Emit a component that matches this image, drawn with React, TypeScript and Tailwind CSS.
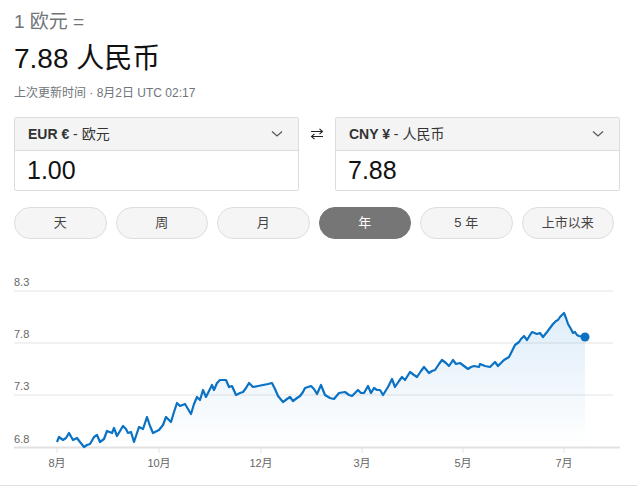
import React from "react";

const FONT = { fontFamily: '"Liberation Sans", Arial, "Noto Sans CJK SC", sans-serif' };

// chart points in page coordinates (svg viewBox starts at y=260)
const PTS: [number, number][] = [
  [57, 442], [59, 437], [63, 440], [66, 438], [69, 433], [73, 440], [77, 438], [80, 442],
  [84, 447], [87, 445], [90, 444], [94, 437], [97, 435], [100, 442], [104, 439], [107, 431],
  [112, 433], [114, 428], [117, 436], [120, 431], [123, 426], [126, 429], [128, 433], [131, 432],
  [134, 442], [139, 427], [143, 429], [147, 417], [150, 426], [153, 433], [159, 430], [163, 425],
  [166, 417], [171, 422], [174, 412], [177, 403], [180, 406], [185, 404], [188, 409], [191, 414],
  [194, 404], [197, 397], [200, 400], [203, 390], [206, 397], [209, 391], [212, 385], [214, 390],
  [217, 383], [220, 380], [226, 380], [229, 387], [232, 386], [236, 395], [240, 393], [243, 392],
  [246, 388], [249, 383], [253, 387], [258, 386], [263, 385], [268, 384], [272, 383], [275, 389],
  [278, 396], [283, 402], [287, 399], [290, 397], [293, 401], [297, 398], [300, 396], [303, 392],
  [305, 388], [311, 386], [314, 389], [317, 394], [321, 385], [325, 395], [330, 398], [334, 399],
  [339, 393], [345, 392], [349, 395], [352, 396], [358, 390], [361, 393], [364, 393], [368, 386],
  [371, 393], [374, 388], [377, 390], [380, 390], [383, 395], [388, 387], [392, 379], [395, 387],
  [399, 381], [402, 377], [405, 380], [410, 372], [414, 375], [417, 377], [421, 371], [424, 367],
  [429, 373], [432, 371], [435, 370], [439, 364], [442, 360], [446, 363], [449, 366], [453, 360],
  [456, 364], [460, 363], [464, 366], [468, 369], [471, 367], [474, 366], [479, 367], [480, 364],
  [485, 366], [490, 367], [493, 364], [495, 362], [498, 366], [501, 363], [504, 360], [509, 357],
  [512, 351], [515, 345], [519, 342], [521, 339], [524, 336], [527, 340], [530, 335], [532, 332],
  [537, 334], [540, 333], [543, 337], [547, 332], [550, 328], [553, 324], [556, 321], [558, 320],
  [560, 317], [564, 313], [566, 318], [568, 324], [571, 329], [573, 333], [575, 332], [577, 335],
  [579, 336], [585, 337],
];

const GRID = [
  { v: "8.3", y: 291 },
  { v: "7.8", y: 343 },
  { v: "7.3", y: 395 },
];

const MONTHS = [
  { t: "8月", x: 57 },
  { t: "10月", x: 159 },
  { t: "12月", x: 261 },
  { t: "3月", x: 362 },
  { t: "5月", x: 463 },
  { t: "7月", x: 564 },
];

const RANGES = ["天", "周", "月", "年", "5 年", "上市以来"];

function Chart() {
  const line = PTS.map((p, i) => `${i ? "L" : "M"}${p[0]} ${p[1]}`).join(" ");
  const area = `${line} L585 447 L57 447 Z`;
  return (
    <svg width={637} height={225} viewBox="0 260 637 225" className="block">
      <defs>
        <linearGradient id="fill" x1="0" y1="0" x2="0" y2="1">
          <stop offset="0%" stopColor="#0a78d0" stopOpacity="0.13" />
          <stop offset="100%" stopColor="#0a78d0" stopOpacity="0" />
        </linearGradient>
      </defs>
      {GRID.map((g) => (
        <g key={g.v}>
          <line x1={14} x2={613} y1={g.y} y2={g.y} stroke="#ececec" strokeWidth={1.5} />
          <text x={14} y={g.y - 5} fontSize={11} fill="#666" style={FONT}>
            {g.v}
          </text>
        </g>
      ))}
      <text x={14} y={443} fontSize={11} fill="#666" style={FONT}>
        6.8
      </text>
      <path d={area} fill="url(#fill)" />
      <line x1={14} x2={620} y1={447.5} y2={447.5} stroke="#e2e2e2" strokeWidth={2} />
      {MONTHS.map((m) => (
        <g key={m.t}>
          <line x1={m.x} x2={m.x} y1={448} y2={453} stroke="#e2e2e2" strokeWidth={1} />
          <text x={m.x} y={467} fontSize={11} fill="#666" textAnchor="middle" style={FONT}>
            {m.t}
          </text>
        </g>
      ))}
      <path d={line} fill="none" stroke="#0a72c4" strokeWidth={2.2} strokeLinejoin="round" />
      <circle cx={585} cy={337} r={4.5} fill="#0a72c4" />
    </svg>
  );
}

function CurrencyBox({ code, name, value }: { code: string; name: string; value: string }) {
  return (
    <div className="w-[285px] rounded-[2px] border border-[#dcdcdc] bg-white">
      <div className="flex h-[33px] items-center justify-between border-b border-[#dcdcdc] bg-[#f4f4f4] pl-[13px] pr-[15px] text-[14px] text-[#333]">
        <span>
          <span className="font-bold">{code}</span> - {name}
        </span>
        <svg width="12" height="8" viewBox="0 0 12 8">
          <path d="M1 1.5 L6 6 L11 1.5" fill="none" stroke="#555" strokeWidth="1.2" />
        </svg>
      </div>
      <div className="flex h-[39px] items-center pl-[12px] text-[25px] text-[#111]">{value}</div>
    </div>
  );
}

export default function App() {
  return (
    <div className="h-[486px] w-[637px] overflow-hidden bg-white" style={FONT}>
      <div className="px-[14px] pt-[10px]">
        <div className="text-[19px] leading-[24px] text-[#70757a]">1 欧元 =</div>
        <div className="mt-[7px] text-[28px] leading-[36px] text-[#111]">7.88 人民币</div>
        <div className="mt-[8px] text-[12px] leading-[16px] text-[#70757a]">
          上次更新时间 · 8月2日 UTC 02:17
        </div>
        <div className="mt-[16px] flex items-start">
          <CurrencyBox code="EUR €" name="欧元" value="1.00" />
          <div className="flex h-[34px] w-[36px] items-center justify-center">
            <svg width="14" height="12" viewBox="0 0 14 12">
              <path d="M1 3.5 H12.5 M9.5 0.8 L12.5 3.5 L9.5 6.2" fill="none" stroke="#222" strokeWidth="1.1" />
              <path d="M13 8.5 H1.5 M4.5 5.8 L1.5 8.5 L4.5 11.2" fill="none" stroke="#222" strokeWidth="1.1" />
            </svg>
          </div>
          <CurrencyBox code="CNY ¥" name="人民币" value="7.88" />
        </div>
        <div className="mt-[16px] grid w-[600px] grid-cols-6 gap-[9px]">
          {RANGES.map((r) => (
            <div
              key={r}
              className={
                r === "年"
                  ? "flex h-[32px] items-center justify-center rounded-full border border-[#767676] bg-[#767676] text-[13px] text-white"
                  : "flex h-[32px] items-center justify-center rounded-full border border-[#dedede] bg-[#f5f5f5] text-[13px] text-[#444]"
              }
            >
              {r}
            </div>
          ))}
        </div>
      </div>
      <div className="mt-[21px]">
        <Chart />
      </div>
      <div className="h-px bg-[#e0e0e0]" />
    </div>
  );
}
